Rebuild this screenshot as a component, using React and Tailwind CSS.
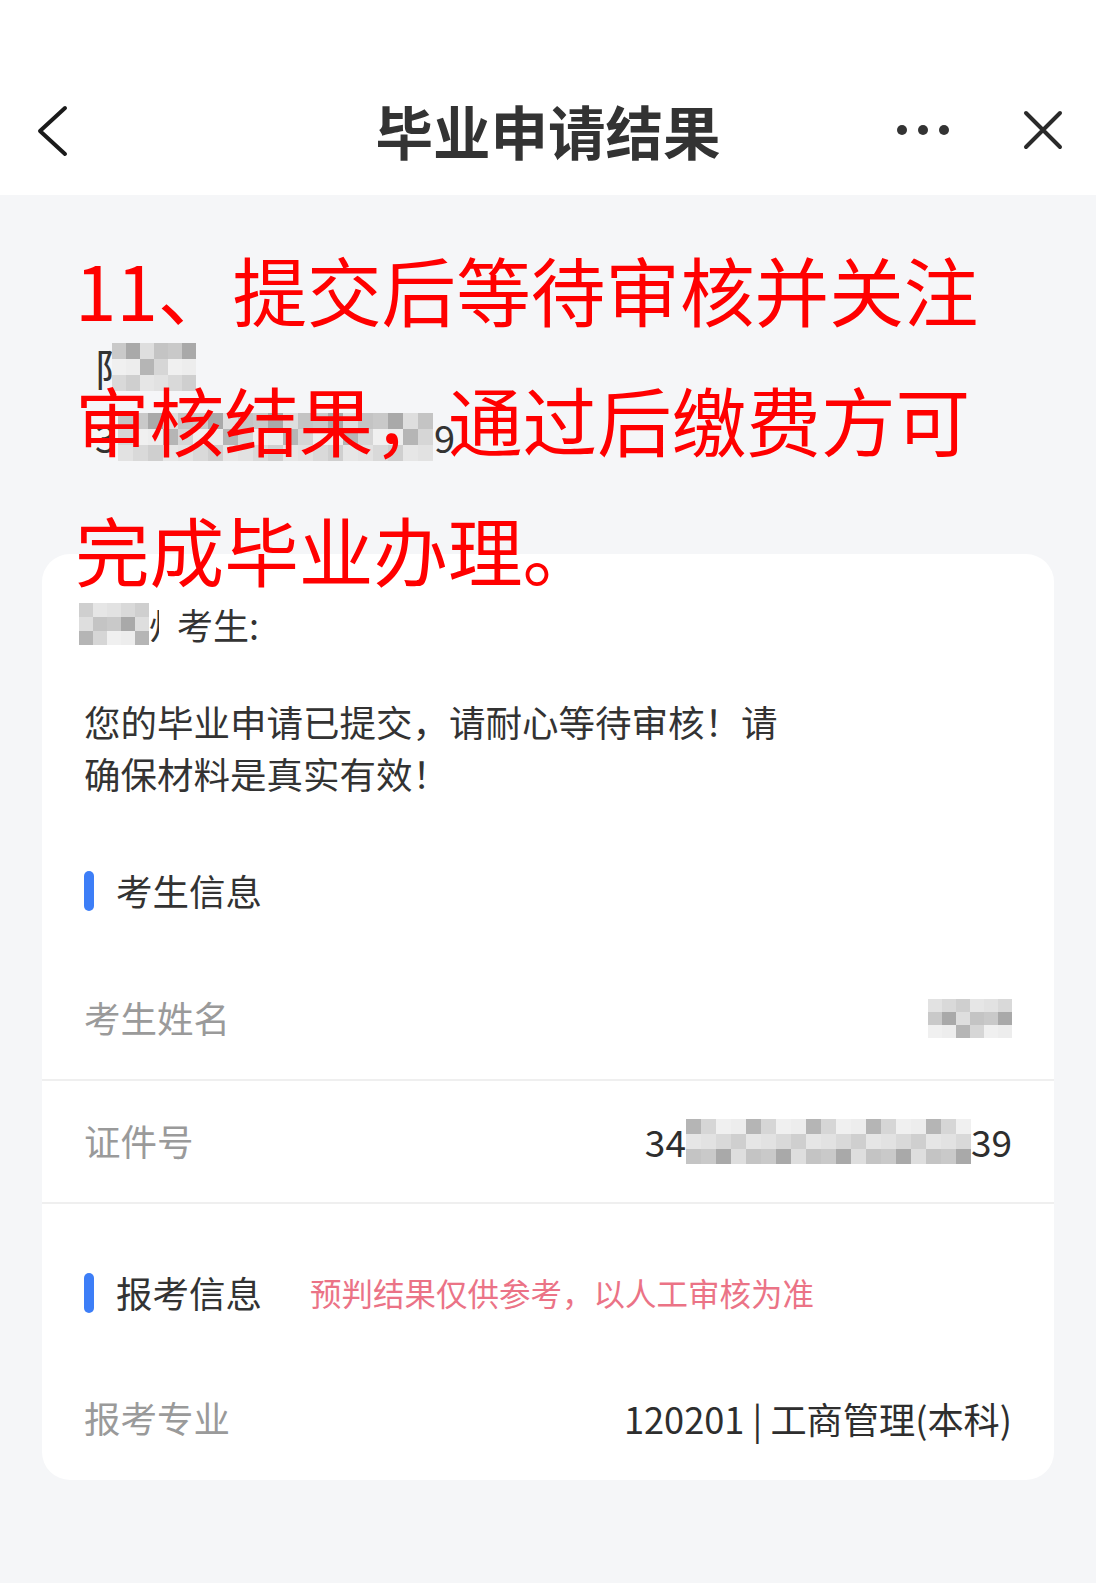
import React from "react";

const FONT = { fontFamily: '"Noto Sans CJK SC", "Noto Sans", sans-serif' };

// pixelated blur blocks (grayscale mosaic)
const GRAYS = [
  "bg-[#d6d6d6]",
  "bg-[#c4c4c4]",
  "bg-[#e6e6e6]",
  "bg-[#b5b5b5]",
  "bg-[#dedede]",
  "bg-[#cfcfcf]",
  "bg-[#ededed]",
  "bg-[#a9a9a9]",
  "bg-[#d9d9d9]",
  "bg-[#f0f0f0]",
  "bg-[#c9c9c9]",
  "bg-[#e2e2e2]",
];

function Mosaic({ cols, rows, cellClass, seed = 0 }) {
  const cells = [];
  for (let r = 0; r < rows; r++) {
    for (let c = 0; c < cols; c++) {
      const idx = (r * 7 + c * 5 + seed + ((r + c + seed) % 3) * 4) % GRAYS.length;
      cells.push(<div key={`${r}-${c}`} className={`${cellClass} ${GRAYS[idx]}`} />);
    }
  }
  return (
    <div className="flex flex-col shrink-0">
      {Array.from({ length: rows }, (_, r) => (
        <div key={r} className="flex">
          {cells.slice(r * cols, (r + 1) * cols)}
        </div>
      ))}
    </div>
  );
}

function SectionTitle({ children, note }) {
  return (
    <div className="flex items-center h-[60px] px-[42px]">
      <div className="w-[10px] h-[40px] rounded-full bg-[#3d7ef7]" />
      <span className="ml-[22px] text-[36.5px] text-[#333] leading-none">{children}</span>
      {note && (
        <span className="ml-[48px] text-[31.5px] text-[#eb7386] leading-none">{note}</span>
      )}
    </div>
  );
}

function InfoRow({ label, children, divider }) {
  return (
    <div
      className={`flex items-center justify-between px-[42px] h-[123px] ${
        divider ? "border-b-2 border-[#efefef]" : ""
      }`}
    >
      <span className="text-[36.5px] text-[#9a9a9a]">{label}</span>
      <div className="flex items-center text-[37px] text-[#2e2e2e]">{children}</div>
    </div>
  );
}

export default function App() {
  return (
    <div style={FONT} className="w-[1096px] min-h-[1583px] bg-[#f5f6f8]">
      {/* Header */}
      <header className="bg-white h-[195px] pt-[65px]">
        <div className="relative h-[130px] flex items-center justify-center">
          <svg
            className="absolute left-[34px] top-[40px]"
            width="36"
            height="52"
            viewBox="0 0 36 52"
            fill="none"
          >
            <path d="M31 3 L6 26 L31 49" stroke="#1a1a1a" strokeWidth="4" strokeLinecap="round" strokeLinejoin="round" />
          </svg>
          <h1 className="text-[57.5px] font-bold text-[#333]">毕业申请结果</h1>
          <div className="absolute left-[897px] top-[60px] flex gap-[11px]">
            <span className="w-[10px] h-[10px] rounded-full bg-[#333]" />
            <span className="w-[10px] h-[10px] rounded-full bg-[#333]" />
            <span className="w-[10px] h-[10px] rounded-full bg-[#333]" />
          </div>
          <svg
            className="absolute left-[1023px] top-[45px]"
            width="40"
            height="40"
            viewBox="0 0 40 40"
            fill="none"
          >
            <path d="M3 3 L37 37 M37 3 L3 37" stroke="#2a2a2a" strokeWidth="4" strokeLinecap="round" />
          </svg>
        </div>
      </header>

      {/* Body */}
      <main className="relative pb-[118px]">
        <div className="pt-[148px] pl-[95px]">
          <div className="flex items-center h-[48px]">
            <span className="text-[46px] text-[#333] leading-none w-[17px] overflow-hidden">阿</span>
            <Mosaic cols={6} rows={3} cellClass="w-[14px] h-[16px]" seed={2} />
          </div>
          <div className="flex items-center h-[48px] mt-[22px]">
            <span className="text-[38px] text-[#333] leading-none w-[23px] overflow-hidden">3</span>
            <Mosaic cols={21} rows={3} cellClass="w-[15px] h-[16px]" seed={5} />
            <div className="w-[22px] overflow-hidden flex justify-end">
              <span className="text-[38px] text-[#333] leading-none shrink-0">39</span>
            </div>
          </div>
        </div>

        {/* Card */}
        <section className="mx-[42px] mt-[93px] bg-white rounded-[28px] pt-[44px]">
          <div className="flex items-center h-[52px] px-[37px]">
            <Mosaic cols={5} rows={3} cellClass="w-[14px] h-[14px]" seed={1} />
            <span className="text-[36px] text-[#333] leading-none w-[10px] overflow-hidden">州</span>
            <span className="ml-[18px] text-[36px] text-[#333] leading-none">考生:</span>
          </div>

          <p className="mt-[46px] px-[42px] text-[36.5px] leading-[52px] text-[#333]">
            您的毕业申请已提交，请耐心等待审核！请
            <br />
            确保材料是真实有效！
          </p>

          <div className="mt-[61px]">
            <SectionTitle>考生信息</SectionTitle>
          </div>
          <div className="mt-[37px]">
            <InfoRow label="考生姓名" divider>
              <Mosaic cols={6} rows={3} cellClass="w-[14px] h-[13px]" seed={7} />
            </InfoRow>
            <InfoRow label="证件号" divider>
              <span className="leading-none">34</span>
              <Mosaic cols={19} rows={3} cellClass="w-[15px] h-[15px]" seed={3} />
              <span className="leading-none">39</span>
            </InfoRow>
          </div>

          <div className="mt-[59px]">
            <SectionTitle note="预判结果仅供参考，以人工审核为准">报考信息</SectionTitle>
          </div>
          <div className="mt-[34px]">
            <InfoRow label="报考专业">
              <span className="text-[36.2px]">120201 | 工商管理(本科)</span>
            </InfoRow>
          </div>
        </section>

        {/* Annotation overlay */}
        <div className="absolute left-[75px] top-[28px] text-[74.6px] leading-[130px] text-[#ff0000] whitespace-nowrap pointer-events-none">
          <div>11、提交后等待审核并关注</div>
          <div>审核结果，通过后缴费方可</div>
          <div>完成毕业办理。</div>
        </div>
      </main>
    </div>
  );
}
